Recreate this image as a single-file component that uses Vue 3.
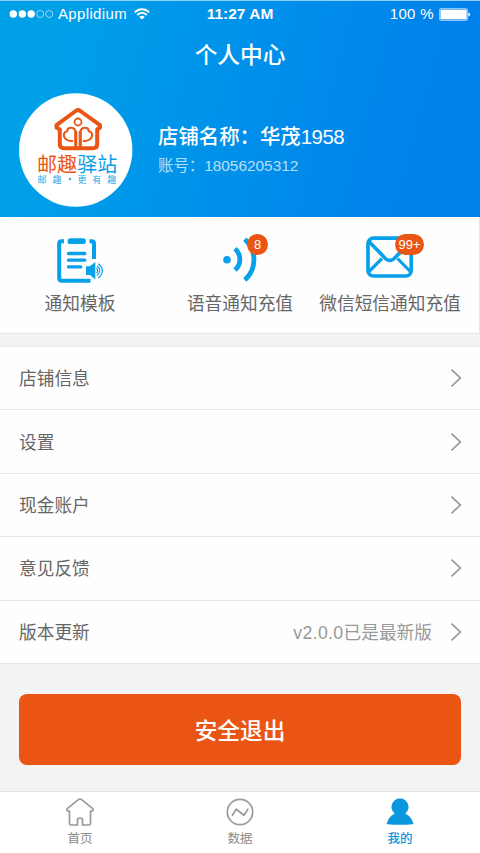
<script setup>
const rows = [
  { label: '店铺信息' },
  { label: '设置' },
  { label: '现金账户' },
  { label: '意见反馈' },
  { label: '版本更新', version: 'v2.0.0', note: '已是最新版' },
]
</script>

<template>
  <main class="screen">
    <header class="hero">
      <div class="status">
        <div class="carrier">
          <svg width="45" height="10" viewBox="0 0 45 10">
            <g fill="#fff">
              <circle cx="4.3" cy="5" r="3.7" />
              <circle cx="13.3" cy="5" r="3.7" />
              <circle cx="22.2" cy="5" r="3.7" />
            </g>
            <g fill="none" stroke="#fff" stroke-width=".7" opacity=".85">
              <circle cx="31.2" cy="5" r="3.5" />
              <circle cx="40.2" cy="5" r="3.5" />
            </g>
          </svg>
          <span class="name">Applidium</span>
          <svg class="wifi" width="16" height="12" viewBox="0 0 16 12">
            <g fill="none" stroke="#fff" stroke-width="1.8">
              <path d="M.8 4.4C4.8.2 11.2.2 15.2 4.4" />
              <path d="M3.2 7C6 4.2 10 4.2 12.800 7" />
            </g>
            <path d="M5.200 8.900Q8 6.500 10.800 8.900L8 11.600Z" fill="#fff" />
          </svg>
        </div>
        <strong class="time">11:27 AM</strong>
        <div class="power">
          <span>100 %</span>
          <svg width="32" height="13" viewBox="0 0 32 13">
            <rect x=".5" y=".5" width="28" height="12" rx="1.2" fill="#fff" fill-opacity=".3" stroke="#fff" stroke-opacity=".45" />
            <rect x="1.6" y="1.8" width="26" height="9.4" fill="#fff" />
            <path d="M29.3 4.3Q31.3 5 31.3 6.5T29.3 8.7Z" fill="#fff" opacity=".9" />
          </svg>
        </div>
      </div>
      <h1>个人中心</h1>
      <section class="profile">
        <svg class="avatar" width="114" height="114" viewBox="19 93 114 114">
          <circle cx="75.7" cy="150" r="56.7" fill="#fff" />
          <g fill="none" stroke="#ea5514" stroke-linejoin="round" stroke-linecap="round">
            <path d="M59.800 129.500V144Q59.800 148.200 64 148.200H93Q97.200 148.200 97.200 144V129.500L100 127.500V125.200L80.300 111Q78 109.300 75.700 111L56.500 125.200V127.500Z" stroke-width="4" />
            <circle cx="78" cy="122" r="3.500" stroke-width="1.800" />
            <path d="M75.700 147V133.500Q75.700 128 71.300 127.800C68.500 127.700 67.300 129.500 67.200 131.300C63.800 131.800 62.800 135.500 64.800 138Q67 141 72.300 141" stroke-width="2.100" />
            <path d="M80.300 147V133.500Q80.300 128 84.700 127.800C87.500 127.700 88.700 129.500 88.800 131.300C92.200 131.800 93.200 135.500 91.200 138Q89 141 83.700 141" stroke-width="2.100" />
            <path d="M75.800 132V147M80.200 132V147" stroke-width="3" />
          </g>
          <g class="brand">
            <text x="37" y="171.800" fill="#ea5514">邮趣</text>
            <text x="77.300" y="171.800" fill="#0a9de6">驿站</text>
          </g>
          <text class="slogan" y="182.600" fill="#2ba7e6" x="37.500 52.500">邮趣</text>
          <circle cx="70" cy="179" r="1.200" fill="#2ba7e6" />
          <text class="slogan" y="182.600" fill="#2ba7e6" x="77.500 92.300 107.200">更有趣</text>
        </svg>
        <div class="who">
          <div class="shop">店铺名称：华茂<span class="digits">1958</span></div>
          <div class="account">账号：18056205312</div>
        </div>
      </section>
    </header>

    <section class="services">
      <div class="service">
        <svg width="60" height="54" viewBox="50 232 60 54">
          <g fill="none" stroke="#07a0ea" stroke-width="4">
            <path d="M64 241.200H61.500Q59.200 241.200 59.200 243.500V278Q59.200 280.700 62 280.700H90.500" />
            <path d="M89.500 241.200H91.500Q94 241.200 94 243.500V259" />
            <g stroke-width="3.300" stroke-linecap="round">
              <path d="M68.500 253.500H84.800M68.500 260.200H84.800M68.500 266.900H80.800" />
            </g>
            <path d="M70.500 241.200H83" stroke-width="5.800" stroke-linecap="round" />
          </g>
          <path d="M86 266.200H90L95.300 262V279.500L90 275H86Z" fill="#07a0ea" />
          <g fill="none" stroke="#07a0ea" stroke-width="1.200">
            <path d="M96.500 268Q98.800 270.600 96.500 273.200" />
            <path d="M97 265.700Q102.500 270.600 97 275.500" />
            <path d="M98.300 263.700Q106.500 270.600 98.300 278" />
          </g>
        </svg>
        <span>通知模板</span>
      </div>
      <div class="service">
        <svg width="60" height="54" viewBox="210 232 60 54">
          <circle cx="227" cy="259.700" r="3.800" fill="#07a0ea" />
          <g fill="none" stroke="#07a0ea" stroke-width="4.800">
            <path d="M235 248.800C241.500 254.500 241.500 264.500 235 270" />
            <path d="M244.800 239.300C257 250.500 257 269 244.800 280" />
          </g>
        </svg>
        <b class="badge single">8</b>
        <span>语音通知充值</span>
      </div>
      <div class="service">
        <svg width="60" height="54" viewBox="360 232 60 54">
          <g fill="none" stroke="#07a0ea" stroke-width="3.700">
            <rect x="368" y="238.200" width="43.200" height="37.800" rx="5.500" />
            <path d="M368.500 241L383.500 256.500Q389.800 264.500 396.200 256.500L411 241" stroke-width="3.600" />
            <path d="M369 271.500L382 258.500M410.300 271.500L397.500 258.500" stroke-width="3.200" />
          </g>
        </svg>
        <b class="badge wide">99+</b>
        <span>微信短信通知充值</span>
      </div>
    </section>

    <section class="list">
      <div v-for="row in rows" :key="row.label" class="row">
        <span class="label">{{ row.label }}</span>
        <span v-if="row.note" class="value"><span class="version">{{ row.version }}</span>{{ row.note }}</span>
        <svg class="arrow" width="12" height="20" viewBox="0 0 12 20">
          <path d="M1.500 1.700L10.300 10L1.500 18.300" fill="none" stroke="#999" stroke-width="1.700" />
        </svg>
      </div>
    </section>

    <button class="logout">安全退出</button>

    <nav class="tabs">
      <div class="tab">
        <svg width="30" height="30" viewBox="65 797 30 30">
          <path d="M69.500 811V823.500Q69.500 825 71 825H77.500V820Q77.500 818 80 818T82.500 820V825H89Q90.500 825 90.500 823.500V811Q94 811.500 93 808.800L82 799.800Q80 798.200 78 799.800L67 808.800Q66 811.500 69.500 811Z" fill="none" stroke="#999" stroke-width="1.700" stroke-linejoin="round" />
        </svg>
        <span>首页</span>
      </div>
      <div class="tab">
        <svg width="30" height="30" viewBox="225 797 30 30">
          <g fill="none" stroke="#999" stroke-width="1.700">
            <circle cx="240" cy="812" r="12.700" />
            <path d="M232 815.700L236.200 809.300L244 815.200L248.200 808.700" stroke-linejoin="round" />
          </g>
        </svg>
        <span>数据</span>
      </div>
      <div class="tab active">
        <svg width="30" height="30" viewBox="385 797 30 30">
          <path d="M400 798.400A8.500 8.500 0 0 1 405.300 813.500Q411.300 816.500 413.500 823.800Q413 824.800 400 824.800T386.600 823.800Q388.700 816.500 394.700 813.500A8.500 8.500 0 0 1 400 798.400Z" fill="#0a97de" />
        </svg>
        <span>我的</span>
      </div>
    </nav>
  </main>
</template>

<style>
body {
  margin: 0;
  background: #f3f3f3;
}
</style>

<style scoped>
* {
  box-sizing: border-box;
}
.screen {
  width: 480px;
  height: 853px;
  display: flex;
  flex-direction: column;
  overflow: hidden;
  background: #f3f3f3;
  color: #666;
  font-family: "Liberation Sans", "Noto Sans CJK SC", sans-serif;
}
.hero {
  height: 217px;
  flex: none;
  border-top: 1px solid #8ecff5;
  background: linear-gradient(105deg, #00a0e9 12%, #0080eb 90%);
  color: #fff;
}
.status {
  height: 26px;
  padding: 0 9px;
  display: grid;
  grid-template-columns: 1fr auto 1fr;
  align-items: center;
  font-size: 15px;
  line-height: 26px;
}
.carrier,
.power {
  display: flex;
  align-items: center;
}
.name {
  margin-left: 4px;
  letter-spacing: 0.35px;
}
.wifi {
  margin-left: 7px;
}
.time {
  font-size: 15.5px;
}
.power {
  justify-content: flex-end;
  gap: 5px;
  letter-spacing: 0.35px;
}
h1 {
  margin: 10px 0 0;
  text-align: center;
  font-size: 22.7px;
  line-height: 36px;
  font-weight: 500;
}
.profile {
  display: flex;
  margin-top: 20px;
  padding-left: 19px;
}
.brand {
  font-size: 20px;
}
.slogan {
  font-size: 9px;
}
.who {
  padding: 28px 0 0 25px;
}
.shop {
  font-size: 20.4px;
  line-height: 32px;
  font-weight: 500;
}
.digits {
  letter-spacing: -0.5px;
}
.account {
  font-size: 15.4px;
  line-height: 26px;
  opacity: 0.7;
}
.services {
  height: 117px;
  flex: none;
  display: grid;
  grid-template-columns: 160px 160px 160px;
  background: #fefefe;
  border-bottom: 1px solid #e5e5e5;
  border-right: 1px solid #e5e5e5;
}
.service {
  position: relative;
  display: flex;
  flex-direction: column;
  align-items: center;
  gap: 3px;
  padding-top: 15px;
  font-size: 17.7px;
  line-height: 30px;
  white-space: nowrap;
}
.service:nth-child(3) {
  padding-right: 20px;
}
.badge {
  position: absolute;
  top: 17px;
  height: 21px;
  border-radius: 11px;
  background: #ea5514;
  color: #fff;
  font-size: 13px;
  line-height: 21px;
  font-weight: 400;
  text-align: center;
}
.single {
  left: 87px;
  width: 21px;
}
.wide {
  left: 75px;
  width: 29px;
}
.list {
  flex: none;
  height: 318px;
  margin-top: 12px;
  display: grid;
  grid-template-rows: repeat(5, 1fr);
  border-top: 1px solid #e8e8e8;
  background: #fefefe;
}
.row {
  display: flex;
  align-items: center;
  padding: 0 18px 0 19px;
  border-bottom: 1px solid #e8e8e8;
  font-size: 17.7px;
}
.label,
.value {
  padding-bottom: 2px;
}
.value {
  margin-left: auto;
  color: #999;
}
.version {
  letter-spacing: 0.35px;
}
.arrow {
  margin-left: auto;
}
.value + .arrow {
  margin-left: 18px;
}
.logout {
  flex: none;
  height: 71px;
  margin: 30px 19px 0;
  padding: 0;
  border: 0;
  border-radius: 8px;
  background: #ea5514;
  color: #fff;
  font: 500 22.7px "Noto Sans CJK SC", sans-serif;
}
.tabs {
  height: 62px;
  flex: none;
  margin-top: auto;
  display: grid;
  grid-template-columns: repeat(3, 1fr);
  border-top: 1px solid #e2e2e2;
  background: #fff;
}
.tab {
  display: flex;
  flex-direction: column;
  align-items: center;
  gap: 1px;
  padding-top: 5px;
  color: #8c8c8c;
  font-size: 12.5px;
  line-height: 22px;
}
.active {
  color: #0a97de;
  font-weight: 500;
}
</style>
